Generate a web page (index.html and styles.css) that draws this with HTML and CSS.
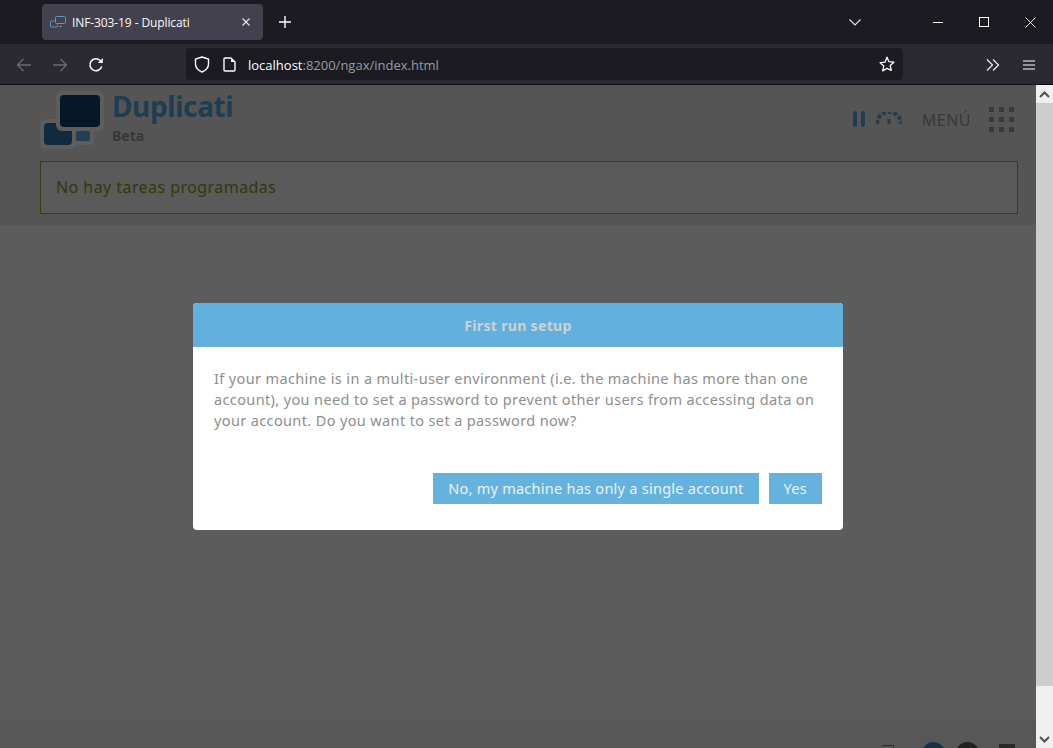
FILE: index.html
```html
<!DOCTYPE html>
<html lang="es">
<head>
<meta charset="utf-8">
<title>INF-303-19 - Duplicati</title>
<link rel="stylesheet" href="styles.css">
</head>
<body>
<div class="window">
  <div class="tabstrip">
    <div class="tab">
      <svg class="tab-icon" width="16" height="12" viewBox="0 0 16 12"><rect x="5.500" y=".5" width="10" height="7" rx="1" fill="none" stroke="#5b9ac4"/><path d="M4.500 5H1.500a1 1 0 0 0-1 1v4a1 1 0 0 0 1 1h5a1 1 0 0 0 1-1V8.500" fill="none" stroke="#5b9ac4"/><path d="M9 10.500h3" stroke="#5b9ac4"/></svg>
      <span class="tab-title">INF-303-19 - Duplicati</span>
      <svg class="tab-close" width="8" height="8" viewBox="0 0 8 8"><path d="M.5.500l7 7M7.500.500l-7 7" stroke="#e8e8ea" stroke-width="1.100"/></svg>
    </div>
    <svg class="new-tab" width="12" height="12" viewBox="0 0 12 12"><path d="M6 0v12M0 6h12" stroke="#fbfbfe" stroke-width="1.400"/></svg>
    <div class="strip-right">
      <svg class="tab-list" width="12" height="7" viewBox="0 0 12 7"><path d="M.5.500L6 6l5.500-5.500" fill="none" stroke="#e0e0e2" stroke-width="1.200"/></svg>
      <div class="win-btn"><svg width="11" height="11" viewBox="0 0 11 11"><path d="M0 5.500h10" stroke="#fff"/></svg></div>
      <div class="win-btn"><svg width="11" height="11" viewBox="0 0 11 11"><rect x=".5" y=".5" width="9" height="9" fill="none" stroke="#fff"/></svg></div>
      <div class="win-btn"><svg width="11" height="11" viewBox="0 0 11 11"><path d="M.5.500l10 10M10.500.500l-10 10" stroke="#fff" stroke-width=".9"/></svg></div>
    </div>
  </div>
  <div class="toolbar">
    <svg class="nav nav-back" width="16" height="14" viewBox="0 0 16 14"><path d="M15 7H1.500M7.500 1L1.500 7l6 6" fill="none" stroke="#6a6970" stroke-width="1.300"/></svg>
    <svg class="nav nav-fwd" width="16" height="14" viewBox="0 0 16 14"><path d="M1 7h13.500M8.500 1l6 6-6 6" fill="none" stroke="#6a6970" stroke-width="1.300"/></svg>
    <svg class="nav nav-reload" width="16" height="16" viewBox="0 0 16 16"><path d="M13.700 9.500A6 6 0 1 1 12.200 3.500L14 5" fill="none" stroke="#fbfbfe" stroke-width="1.500"/><path d="M14.800 1v5h-5z" fill="#fbfbfe"/></svg>
    <div class="urlbar">
      <svg class="shield" width="16" height="17" viewBox="0 0 16 17"><path d="M8 1l6.500 2v5c0 4-3 6.500-6.500 8C4.500 14.500 1.500 12 1.500 8V3z" fill="none" stroke="#fbfbfe" stroke-width="1.400"/></svg>
      <svg class="page-icon" width="13" height="15" viewBox="0 0 13 15"><path d="M2 1h6l4 4v8a1 1 0 0 1-1 1H2a1 1 0 0 1-1-1V2a1 1 0 0 1 1-1z" fill="none" stroke="#fbfbfe" stroke-width="1.400"/><path d="M8 1v4h4z" fill="#fbfbfe"/></svg>
      <span class="url"><span class="url-host">localhost</span>:8200/ngax/index.html</span>
      <svg class="star" width="16" height="16" viewBox="0 0 16 16"><path d="M8 1.200l2 4.500 4.900.500-3.700 3.300 1.100 4.900L8 12.400l-4.300 2.500 1.100-4.900L1.100 6.700 6 6.200z" fill="none" stroke="#fbfbfe" stroke-width="1.300" stroke-linejoin="round"/></svg>
    </div>
    <svg class="overflow" width="14" height="12" viewBox="0 0 14 12"><path d="M1 .5L6.500 6 1 11.500M7 .5L12.500 6 7 11.500" fill="none" stroke="#e8e8ea" stroke-width="1.300"/></svg>
    <svg class="hamburger" width="12" height="10" viewBox="0 0 12 10"><path d="M0 1h12M0 5h12M0 9h12" stroke="#fbfbfe" stroke-width="1.200"/></svg>
  </div>
  <div class="viewport">
    <div class="page">
      <div class="top">
        <header class="app-header">
          <div class="brand">
            <svg class="logo" width="64" height="58" viewBox="0 0 64 58">
              <rect x="0" y="28" width="36" height="30" rx="6" fill="#e8e8e8"/>
              <rect x="4" y="32" width="28" height="22" rx="4" fill="#2a6a9f"/>
              <rect x="32" y="36" width="22" height="18" rx="3" fill="#e8e8e8"/>
              <rect x="36" y="40" width="14" height="10" rx="1.500" fill="#5f9dc4"/>
              <rect x="16" y="0" width="48" height="40" rx="6" fill="#e8e8e8"/>
              <rect x="20" y="4" width="40" height="32" rx="4" fill="#0f3a62"/>
            </svg>
            <div class="brand-text">
              <div class="brand-name">Duplicati</div>
              <div class="brand-tag">Beta</div>
            </div>
          </div>
          <div class="actions">
            <span class="pause"><i></i><i></i></span>
            <svg class="gauge" width="26" height="14" viewBox="0 0 26 14"><path d="M1 12a12 12 0 0 1 24 0" fill="none" stroke="#5f93b3" stroke-width="4" stroke-dasharray="4 1.800"/><path d="M11 7l4 0 -1 5a1.500 1.500 0 0 1-2 0z" fill="#4f9ac8"/></svg>
            <span class="menu-label">MENÚ</span>
            <div class="grid-icon"><i></i><i></i><i></i><i></i><i></i><i></i><i></i><i></i><i></i></div>
          </div>
        </header>
        <div class="notice">No hay tareas programadas</div>
      </div>
      <main class="content"></main>
      <footer class="footer">
        <span class="foot-ext"></span>
        <span class="foot-round foot-blue"></span>
        <span class="foot-round foot-dark"></span>
        <span class="foot-square"></span>
      </footer>
      <div class="overlay">
        <div class="modal">
          <div class="modal-title">First run setup</div>
          <p class="modal-text">If your machine is in a multi-user environment (i.e. the machine has more than one account), you need to set a password to prevent other users from accessing data on your account. Do you want to set a password now?</p>
          <div class="modal-buttons">
            <button class="btn">No, my machine has only a single account</button>
            <button class="btn">Yes</button>
          </div>
        </div>
      </div>
    </div>
    <div class="scrollbar">
      <div class="sb-btn"><svg width="11" height="7" viewBox="0 0 11 7"><path d="M1 6l4.500-4.500L10 6" fill="none" stroke="#505050" stroke-width="2"/></svg></div>
      <div class="sb-thumb"></div>
      <div class="sb-track"></div>
      <div class="sb-btn sb-light"><svg width="11" height="7" viewBox="0 0 11 7"><path d="M1 1l4.500 4.500L10 1" fill="none" stroke="#505050" stroke-width="2"/></svg></div>
    </div>
  </div>
</div>
</body>
</html>
```
FILE: styles.css
```css
* { box-sizing: border-box; }
html, body { margin: 0; height: 100%; overflow: hidden; }
body { font-family: "Noto Sans", "Liberation Sans", sans-serif; background: #1c1b22; }
svg { display: block; flex: none; }

.window { display: flex; flex-direction: column; height: 748px; }

.tabstrip { height: 44px; background: #1c1b22; display: flex; align-items: center; padding-left: 42px; flex: none; }
.tab { width: 221px; height: 36px; background: #42414d; border-radius: 4px; display: flex; align-items: center; padding: 0 13px 0 8px; color: #fbfbfe; }
.tab-icon { margin-right: 6px; }
.tab-title { font-family: "Open Sans", sans-serif; font-size: 12px; flex: 1; white-space: nowrap; letter-spacing: -.1px; }
.new-tab { margin-left: 16px; }
.strip-right { margin-left: auto; display: flex; align-items: center; }
.tab-list { margin-right: 54px; }
.win-btn { width: 46px; display: flex; justify-content: center; }

.toolbar { height: 41px; background: #2b2a33; border-bottom: 1px solid #0c0c0d; display: flex; align-items: center; flex: none; }
.nav { margin-top: 1px; }
.nav-back { margin-left: 16px; }
.nav-fwd { margin-left: 20px; }
.nav-reload { margin-left: 20px; }
.urlbar { width: 717px; height: 32px; margin-left: 82px; background: #1c1b22; border-radius: 4px; display: flex; align-items: center; padding: 0 8px; }
.shield { margin-right: 13px; }
.page-icon { margin-right: 12px; }
.url { font-family: "Open Sans", sans-serif; font-size: 13px; color: #9b9ba0; flex: 1; padding-top: 1px; }
.url-host { color: #fbfbfe; }
.overflow { margin-left: 83px; margin-top: 1px; }
.hamburger { margin-left: 23px; margin-top: 1px; }

.viewport { flex: 1; display: flex; min-height: 0; }
.page { flex: 1; position: relative; display: flex; flex-direction: column; background: #e6e6e6; overflow: hidden; }
.top { background: #d4d4d4; padding: 0 18px 11px 40px; flex: none; }
.app-header { height: 76px; display: flex; justify-content: space-between; align-items: flex-start; }
.brand { display: flex; padding-top: 6px; }
.brand-text { margin-left: 8px; margin-top: -3px; }
.brand-name { font-size: 28px; line-height: 36px; font-weight: 700; color: #4f9ac8; letter-spacing: -.4px; }
.brand-tag { font-size: 14px; line-height: 18px; font-weight: 700; color: #888; margin-top: 3px; }
.actions { display: flex; align-items: center; height: 54px; padding-top: 14px; padding-right: 4px; }
.pause { display: flex; gap: 4px; margin-right: 11px; }
.pause i { width: 4px; height: 16px; background: #4f9ac8; border-radius: 2px; }
.gauge { margin-right: 20px; }
.menu-label { font-size: 16px; color: #909090; margin-right: 18px; letter-spacing: .5px; padding-top: 2px; }
.grid-icon { display: grid; grid-template-columns: repeat(3, 5px); gap: 5px; }
.grid-icon i { width: 5px; height: 5px; background: #909090; }

.notice { height: 53px; border: 1px solid #8a9a1f; background: #e2e2e2; color: #7d8c1c; font-size: 16px; letter-spacing: .44px; line-height: 51px; padding-left: 15px; }

.content { flex: 1; }
.footer { height: 28px; flex: none; background: #dadada; display: flex; align-items: flex-start; padding: 22px 0 0 882px; }
.foot-ext { width: 12px; height: 8px; border-top: 1px solid #666; border-right: 1px solid #666; margin-top: 3px; }
.foot-round { width: 23px; height: 23px; border-radius: 50%; }
.foot-blue { background: #3b78c4; margin-left: 28px; }
.foot-dark { background: #555; margin-left: 11px; }
.foot-square { width: 16px; height: 16px; background: #666; margin: 2px 0 0 20px; }

.overlay { position: absolute; inset: 0; background: rgba(0, 0, 0, .6); display: flex; justify-content: center; align-items: flex-start; padding-top: 218px; }
.modal { width: 650px; height: 227px; background: #fff; border-radius: 4px; overflow: hidden; }
.modal-title { height: 44px; background: #62b0de; color: #d0d0d0; font-size: 14px; font-weight: 700; letter-spacing: .33px; line-height: 46px; text-align: center; }
.modal-text { margin: 0; padding: 21px 21px 0; height: 126px; font-size: 14.5px; letter-spacing: .37px; line-height: 21px; color: #8e8e8e; }
.modal-buttons { display: flex; justify-content: flex-end; gap: 10px; padding-right: 21px; }
.btn { height: 31px; padding: 0 15px 2px; border: 0; background: #66b2de; color: #eaf4fa; font-family: inherit; font-size: 14.5px; letter-spacing: .26px; }

.scrollbar { width: 17px; flex: none; display: flex; flex-direction: column; background: #f0f0f0; }
.sb-btn { height: 18px; background: #f0f0f0; display: flex; align-items: center; justify-content: center; }
.sb-thumb { height: 583px; background: #cdcdcd; }
.sb-track { flex: 1; }
```
